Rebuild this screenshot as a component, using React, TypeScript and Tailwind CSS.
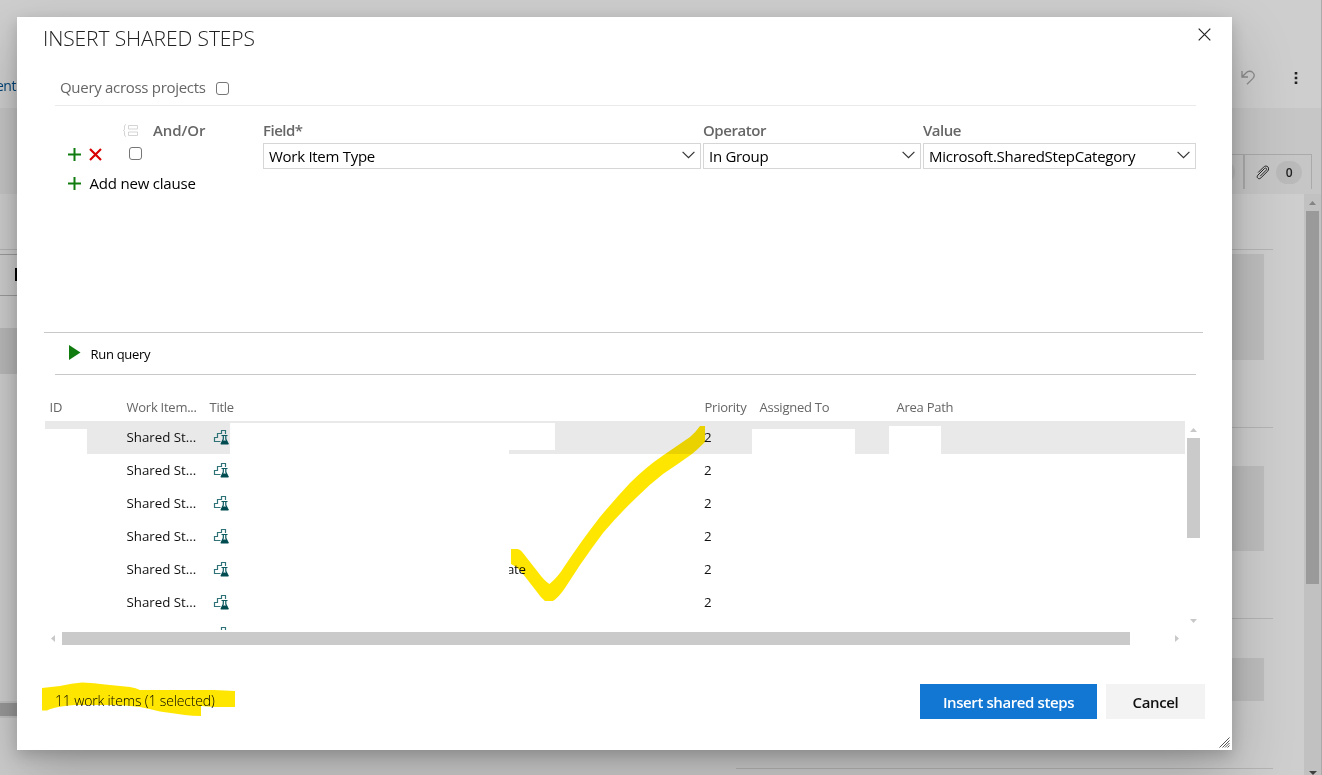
import type { ReactNode } from "react"

const rows = [0, 1, 2, 3, 4, 5]

function Plus() {
    return (
        <svg width="13" height="13" viewBox="0 0 13 13" className="shrink-0">
            <path d="M6.5 0V13M0 6.5H13" stroke="#107c10" strokeWidth="2" fill="none" />
        </svg>
    )
}

function Chevron() {
    return (
        <svg width="13" height="8" viewBox="0 0 13 8" className="-mt-[2px] shrink-0">
            <path d="M.6 .8L6.500 6.700L12.400 .8" stroke="#333" strokeWidth="1.2" fill="none" />
        </svg>
    )
}

function SharedStepIcon() {
    return (
        <svg width="16" height="16" viewBox="0 0 16 16" className="-mt-[2px] shrink-0">
            <path d="M7.500 12.500H1.500V8.500H4.500V4.500H8.500V1.500H12.500V5" stroke="#2f7378" strokeWidth="1.2" fill="none" />
            <path d="M8.500 6.500H14.500M10.300 6.500V10L8.300 14.500H15L12.800 10V6.500" stroke="#0b5a60" strokeWidth="1.2" fill="none" />
            <path d="M9.600 11.500H13.500L15.600 15.600H7.600Z" fill="#004b50" />
        </svg>
    )
}

function Select({ children, className }: { children: ReactNode; className: string }) {
    return (
        <div className={`flex h-[26px] items-center justify-between border border-[#d6d6d6] pl-[5px] pr-[5px] text-[15px] text-black ${className}`}>
            <span>{children}</span>
            <Chevron />
        </div>
    )
}

function Checkbox({ className }: { className: string }) {
    return <span className={`block h-[13px] w-[13px] shrink-0 rounded-[3px] border border-[#767676] bg-white ${className}`} />
}

function LeftStrip() {
    return (
        <div className="flex w-[17px] flex-col">
            <div className="h-[108px] pt-[75px] text-[14px] leading-[22px] tracking-[-0.5px] text-[#004578]">
                <span className="-ml-[4px]">ent</span>
            </div>
            <div className="h-[86px] bg-[#c6c6c6]" />
            <div className="h-[55px]" />
            <div className="h-[6px] border-y border-t-[#b5b5b5] border-b-[#9c9c9c]" />
            <div className="flex h-[41px] items-start justify-end border-b border-[#9c9c9c] pt-[13px]">
                <span className="h-[13px] w-[2px] bg-black" />
            </div>
            <div className="h-[32px]" />
            <div className="h-[46px] bg-[#bababa]" />
            <div className="h-[327px]" />
            <div className="h-[17px] border-y-2 border-[#c1c1c1] bg-[#999]" />
        </div>
    )
}

function RightStrip() {
    return (
        <div className="flex w-[585px] flex-col">
            <div className="flex h-[108px] items-start justify-end pr-5 pt-[70px]">
                <svg width="14" height="15" viewBox="0 0 14 15" className="mr-[39px]">
                    <path d="M1 1V7H7M1.2 6.8L5.2 2.8C7 .8 10 .8 11.7 2.4C13.6 4.2 13.4 6.8 11.7 8.6L6 14.3" stroke="#8b8b8b" strokeWidth="1.3" fill="none" />
                </svg>
                <svg width="4" height="14" viewBox="0 0 4 14" className="mr-[3px] mt-px">
                    <path d="M.7 1h2.6v2.4H.7zM.7 5.8h2.6v2.4H.7zM.7 10.6h2.6V13H.7z" fill="#222" />
                </svg>
            </div>
            <div className="flex h-[86px] justify-end bg-[#c6c6c6] pr-[9px] pt-[46px]">
                <div className="flex h-[35px] w-[90px] items-center justify-end border-t border-r border-[#aaa]">
                    <span className="h-6 w-[13px] rounded-r-full bg-[#bababa]" />
                    <span className="ml-2 h-full w-[2px] bg-[#aaa]" />
                    <svg width="14" height="15" viewBox="0 0 14 15" className="ml-[11px]">
                        <path d="M4.2 11.3L10.4 5.1C11 4.4 10.9 3.7 10.5 3.3C10 2.8 9.3 2.8 8.7 3.4L2 10.1C.9 11.3 1 12.5 1.8 13.2C2.7 14.1 4 14 5 13L11.7 6.3C13.2 4.8 13.2 2.9 12.1 1.8C10.9.6 9 .7 7.6 2.1L2.2 7.5" stroke="#222" strokeWidth="1" fill="none" />
                    </svg>
                    <span className="ml-[7px] mr-[9px] flex h-[23px] w-[26px] items-center justify-center rounded-full bg-[#bababa] pt-[2px] text-[12px] font-semibold text-[#222]">0</span>
                </div>
            </div>
            <div className="flex h-[581px]">
                <div className="flex w-[537px] flex-col">
                    <div className="h-[56px] border-b border-[#b5b5b5]" />
                    <div className="mr-[9px] mt-1 h-[106px] bg-[#bebebe]" />
                    <div className="h-[68px] border-b border-[#b5b5b5]" />
                    <div className="mr-[9px] mt-[38px] h-[85px] bg-[#bebebe]" />
                    <div className="h-[68px] border-b border-[#b5b5b5]" />
                    <div className="mr-[9px] mt-[39px] h-[43px] bg-[#bebebe]" />
                    <div className="h-[68px] border-b border-[#b5b5b5]" />
                </div>
                <div className="ml-[31px] flex w-[17px] flex-col items-center bg-[#c1c1c1]">
                    <svg width="7" height="4" viewBox="0 0 7 4" className="mt-[7px]">
                        <path d="M3.5 0L7 4H0Z" fill="#838383" />
                    </svg>
                    <div className="mt-[6px] h-[373px] w-[13px] bg-[#9a9a9a]" />
                    <svg width="8" height="4" viewBox="0 0 8 4" className="mt-[187px]">
                        <path d="M0 0H8L4 4Z" fill="#404040" />
                    </svg>
                </div>
            </div>
        </div>
    )
}

function Results() {
    return (
        <div className="relative h-[209px] w-[1140px] overflow-hidden text-[13.3px] text-[#111]">
            {rows.map((row) => (
                <div key={row} className={`flex h-[33px] items-center pl-[81px] ${row === 0 ? "bg-[#e9e9e9]" : ""}`}>
                    <span className="w-[87px] pl-[0.5px]">Shared St...</span>
                    <SharedStepIcon />
                    <span className="ml-[279px] w-[196px] tracking-[-0.3px]">
                        {row === 4 && <span className="-ml-px">ate</span>}
                    </span>
                    <span>2</span>
                </div>
            ))}
            <div className="flex h-[33px] pl-[168px] pt-[9px]">
                <SharedStepIcon />
            </div>

            {/* blanked out cells */}
            <div className="absolute left-0 top-2 h-[25px] w-[42px] bg-white" />
            <div className="absolute left-[185px] top-[2px] h-[27px] w-[325px] bg-white" />
            <div className="absolute left-[185px] top-[29px] h-1 w-[279px] bg-white" />
            <div className="absolute left-[462px] top-[140px] h-[18px] w-[2px] bg-white" />
            <div className="absolute left-[707px] top-2 h-[25px] w-[103px] bg-white" />
            <div className="absolute left-[844px] top-[5px] h-[28px] w-[52px] bg-white" />
        </div>
    )
}

function Dialog() {
    return (
        <div className="absolute left-[17px] top-[17px] flex h-[733px] w-[1215px] flex-col bg-white shadow-[0_26px_58px_0_rgba(0,0,0,0.22),0_5px_14px_0_rgba(0,0,0,0.18)]">
            <div className="flex h-[58px] items-start justify-between pl-[26px] pr-[21px]">
                <h1 className="pt-[6px] text-[21px] font-light leading-[30px] tracking-[-0.1px] text-[#222]">INSERT SHARED STEPS</h1>
                <svg width="13" height="13" viewBox="0 0 13 13" className="mt-[11px]">
                    <path d="M.7 .7L12.3 12.3M12.3 .7L.7 12.3" stroke="#222" strokeWidth="1.2" />
                </svg>
            </div>

            <div className="ml-[38px] flex h-[31px] w-[1141px] border-b border-[#eaeaea] pl-[5px]">
                <span className="w-[156px] text-[15px] leading-[24px] tracking-[-0.3px] text-[#666]">Query across projects</span>
                <Checkbox className="mt-[7px]" />
            </div>

            <div className="ml-[38px] flex h-[226px] w-[1141px] pt-[13px] text-[15px] leading-[22px]">
                <div className="w-[208px]">
                    <div className="flex h-[22px] items-center pl-[67px] font-semibold text-[#666]">
                        <svg width="16" height="13" viewBox="0 0 16 13" className="mr-[15px]">
                            <path d="M4 .7C2.5 .7 2.5 1.5 2.5 3V5C2.5 6 2 6.5 1 6.5C2 6.5 2.5 7 2.5 8V10C2.5 11.5 2.5 12.3 4 12.3M6.5 1.5H15.5V5H6.5ZM6.5 8H15.5V11.5H6.5Z" stroke="#d4d4d4" fill="none" />
                        </svg>
                        <span className="tracking-[-0.1px]">And/Or</span>
                    </div>
                    <div className="flex h-[26px] items-center pl-[13px]">
                        <Plus />
                        <svg width="13" height="13" viewBox="0 0 13 13" className="ml-2 mr-[27px]">
                            <path d="M1 1L12 12M12 1L1 12" stroke="#d90000" strokeWidth="2.2" />
                        </svg>
                        <Checkbox className="-mt-[2px]" />
                    </div>
                    <div className="flex h-[32px] items-center pl-[13px] text-black">
                        <Plus />
                        <span className="ml-2 pl-[0.5px] tracking-[-0.2px]">Add new clause</span>
                    </div>
                </div>
                <div className="w-[440px] font-semibold text-[#666]">
                    <div className="h-[24px] tracking-[-0.5px]">Field*</div>
                    <Select className="w-[438px] font-normal tracking-[-0.28px]">Work Item Type</Select>
                </div>
                <div className="w-[220px] font-semibold text-[#666]">
                    <div className="h-[24px] tracking-[-0.45px]">Operator</div>
                    <Select className="w-[218px] font-normal tracking-[-0.3px]">In Group</Select>
                </div>
                <div className="w-[273px] font-semibold text-[#666]">
                    <div className="h-[24px] tracking-[-0.5px]">Value</div>
                    <Select className="w-[273px] font-normal tracking-[-0.25px]">Microsoft.SharedStepCategory</Select>
                </div>
            </div>

            <div className="ml-[27px] h-px w-[1159px] bg-[#c8c8c8]" />
            <div className="ml-[38px] flex h-[42px] w-[1141px] items-center border-b border-[#c8c8c8] pl-[14px]">
                <svg width="12" height="15" viewBox="0 0 12 15" className="-mt-[2px]">
                    <path d="M0 0L11.5 7.5L0 15Z" fill="#107c10" />
                </svg>
                <span className="ml-[9px] pl-[0.5px] pt-[2px] text-[13px] tracking-[-0.3px] text-black">Run query</span>
            </div>

            <div className="ml-[32px] flex h-[46px] pl-[0.5px] pt-[22px] text-[13px] leading-[20px] tracking-[-0.25px] text-[#666]">
                <span className="w-[77px]">ID</span>
                <span className="w-[83px]">Work Item...</span>
                <span className="w-[495px]">Title</span>
                <span className="w-[55px]">Priority</span>
                <span className="w-[137px]">Assigned To</span>
                <span>Area Path</span>
            </div>

            <div className="ml-[28px] flex h-[209px]">
                <Results />
                <div className="ml-[2px] flex w-[13px] flex-col items-center">
                    <svg width="7" height="4" viewBox="0 0 7 4" className="mt-[7px]">
                        <path d="M3.5 0L7 4H0Z" fill="#c8c8c8" />
                    </svg>
                    <div className="mt-[6px] h-[100px] w-[13px] bg-[#cacaca]" />
                    <svg width="7" height="4" viewBox="0 0 7 4" className="mt-[81px]">
                        <path d="M0 0H7L3.5 4Z" fill="#c8c8c8" />
                    </svg>
                </div>
            </div>
            <div className="ml-[34px] mt-[2px] flex h-[13px] items-center">
                <svg width="4" height="7" viewBox="0 0 4 7">
                    <path d="M4 0V7L0 3.5Z" fill="#c8c8c8" />
                </svg>
                <div className="ml-[7px] h-[13px] w-[1068px] bg-[#cacaca]" />
                <svg width="4" height="7" viewBox="0 0 4 7" className="ml-[45px]">
                    <path d="M0 0V7L4 3.5Z" fill="#c8c8c8" />
                </svg>
            </div>

            <div className="ml-[38px] mr-[27px] mt-[39px] flex h-[35px] items-start">
                <span className="mr-auto pt-[6px] text-[14px] font-light leading-[22px] tracking-[-0.15px] text-black">11 work items (1 selected)</span>
                <button className="h-[35px] w-[177px] bg-[#1177d3] pt-[2px] text-[15px] font-semibold tracking-[-0.4px] text-white">Insert shared steps</button>
                <button className="ml-[9px] h-[35px] w-[99px] bg-[#f3f3f3] pt-[2px] text-[15px] font-semibold tracking-[-0.35px] text-[#111]">Cancel</button>
            </div>

            <svg width="11" height="11" viewBox="0 0 11 11" className="ml-auto mr-[2px] mt-auto mb-[2px]">
                <path d="M.5 10.5L10.5 .5M3.5 10.5L10.5 3.5M6 10.5L10.5 6M8.5 10.5L10.5 8.5" stroke="#555" strokeWidth="1" />
            </svg>
        </div>
    )
}

// highlighter strokes drawn over the dialog
function Marker() {
    return (
        <svg width="1322" height="775" viewBox="0 0 1322 775" className="pointer-events-none absolute left-0 top-0 mix-blend-multiply">
            <path
                fill="#ffe600"
                d="M511 549H517Q520 549 523 553L541 576Q546 582 549.5 584Q558 577 564 567Q582 540 600 517Q615 499 630 483Q646 467 663 455.500L690 437Q695 433 700 426H705V442Q698 449 692 454Q678 464 663 474Q650 484 637 497Q619 514 603 533Q591 549 580 565L565 588Q559 597 553 601H545Q541 598 537 592L523 574Q516 566 511 564Z"
            />
            <path
                fill="#ffe600"
                d="M42 688L60 686Q72 683 82 682.500Q95 683 105 684.500L130 687Q136 688 140 690H214L235 691V707H214L201 706V716Q192 716 185 715L160 711.500Q150 709 140 707Q125 705 110 705H75Q62 706 54 708Q49 709 47 710.500H42Z"
            />
        </svg>
    )
}

export default function App() {
    return (
        <div className="relative h-[775px] w-[1322px] overflow-hidden bg-[#cecece] font-['Open_Sans','Noto_Sans',sans-serif]">
            <div className="flex h-[775px] justify-between border-r border-[#aaa]">
                <LeftStrip />
                <RightStrip />
            </div>
            <Dialog />
            <Marker />
        </div>
    )
}
